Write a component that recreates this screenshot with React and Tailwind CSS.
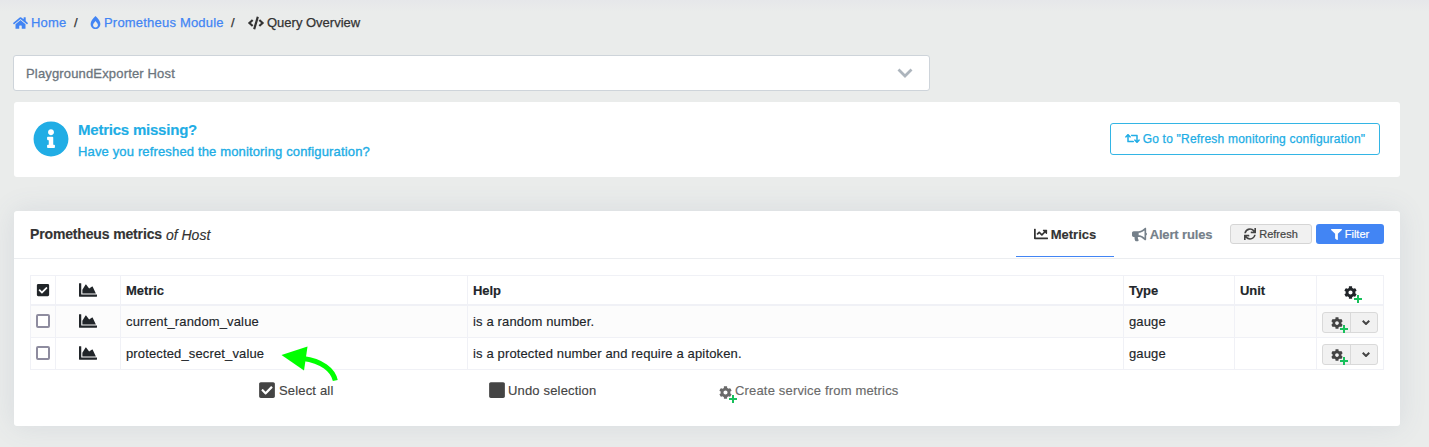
import React from "react";
import {
  FaHome, FaBurn, FaCode, FaInfoCircle, FaRetweet, FaChartLine, FaBullhorn,
  FaSync, FaFilter, FaChartArea, FaCheckSquare, FaSquare, FaCog,
} from "react-icons/fa";

const metrics = [
  { name: "current_random_value", help: "is a random number.", type: "gauge", unit: "" },
  { name: "protected_secret_value", help: "is a protected number and require a apitoken.", type: "gauge", unit: "" },
];

function Chevron({ className, strokeWidth }) {
  return (
    <svg viewBox="0 0 16 10" fill="none" stroke="currentColor" strokeWidth={strokeWidth} className={className}>
      <path d="M1.5 1.5 8 8l6.5-6.5" />
    </svg>
  );
}

function CogPlus({ className }) {
  return (
    <span className="relative block shrink-0">
      <FaCog className={className} />
      <svg viewBox="0 0 8 8" className="absolute -right-[5px] -bottom-[4px] h-2 w-2">
        <path d="M4 0v8M0 4h8" stroke="#18c05b" strokeWidth="2" />
      </svg>
    </span>
  );
}

function Breadcrumb() {
  return (
    <nav className="flex h-[45px] items-center pl-[13px] text-[13px] whitespace-nowrap text-[#333] [-webkit-text-stroke:0.25px_currentColor]">
      <a className="flex items-center text-[#4285f4]">
        <FaHome className="mr-[3px] h-[14px] w-[15px]" />
        <span className="w-9 tracking-[0.2px]">Home</span>
      </a>
      <span className="ml-[7px] w-4">/</span>
      <a className="flex items-center text-[#4285f4]">
        <FaBurn className="mr-[3px] h-[13px] w-[11px]" />
        <span className="w-[119px] tracking-[0.2px]">Prometheus Module</span>
      </a>
      <span className="ml-[8px] w-[17px]">/</span>
      <FaCode className="mr-[3px] h-[14px] w-4" />
      <span>Query Overview</span>
    </nav>
  );
}

const cell = "flex items-center border-r border-[#f0f1f6] pl-[5px]";
const columns = "grid grid-cols-[25px_65px_347px_656px_111px_82px_67px] border-l border-[#f0f1f6]";

function AreaIcon({ className }) {
  return <FaChartArea className={"mr-[6px] h-[18px] w-[18px] " + className} />;
}

function MetricsTable() {
  return (
    <div className="mt-4 ml-4 w-[1354px] border-t border-[#f0f1f6] text-[13px] tracking-[0.14px] text-[#212529]">
      <div className={columns + " h-[30px] border-b-2 font-bold tracking-[-0.05px]"}>
        <div className={cell}><FaCheckSquare className="h-[14px] w-[14px]" /></div>
        <div className={cell + " justify-center"}><AreaIcon className="" /></div>
        <div className={cell + " pt-px"}>Metric</div>
        <div className={cell + " pt-px"}>Help</div>
        <div className={cell + " pt-px"}>Type</div>
        <div className={cell + " pt-px"}>Unit</div>
        <div className={cell + " justify-center"}><span className="mt-[5px] mr-[5px]"><CogPlus className="h-[13px] w-[13px]" /></span></div>
      </div>
      {metrics.map((m, i) => (
        <div key={m.name} className={columns + " h-8 border-b " + (i % 2 ? "bg-white" : "bg-[#fcfcfc]")}>
          <div className={cell}><span className="mb-px h-[14px] w-[14px] rounded-[2px] border-2 border-[#8e8c9f] bg-white" /></div>
          <div className={cell + " justify-center"}><AreaIcon className="mb-[2px]" /></div>
          <div className={cell}>{m.name}</div>
          <div className={cell}>{m.help}</div>
          <div className={cell}>{m.type}</div>
          <div className={cell}>{m.unit}</div>
          <div className={cell}>
            <div className="mt-[2px] flex h-[21px] w-14 rounded-[3px] border border-[#d9d9d9] bg-[#f1f1f1] text-[#444]">
              <button className="flex w-7 items-center border-r border-[#d9d9d9] pt-px pl-[8px]"><CogPlus className="h-[12px] w-[12px]" /></button>
              <button className="flex flex-1 items-center justify-center pb-px pl-[3px]"><Chevron className="h-[5px] w-2" strokeWidth="4" /></button>
            </div>
          </div>
        </div>
      ))}
    </div>
  );
}

function MetricsPanel() {
  return (
    <section className="relative mt-[34px] ml-[14px] h-[215px] w-[1386px] rounded-[3px] bg-white shadow-[0_0_28px_rgba(86,96,140,0.12)]">
      <header className="flex h-12 items-center border-b border-[#ebedf0] pr-4 pl-4">
        <h2 className="text-[14px] font-bold tracking-[-0.15px] text-[#333]">Prometheus metrics</h2>
        <i className="mt-[2px] ml-1 text-[14px] text-[#333]">of Host</i>
        <div className="ml-auto flex h-full items-center pb-px">
          <a className="flex h-[46px] w-[98px] items-center justify-center self-start border-b border-[#4285f4] pt-[3px] text-[13px] font-bold text-[#333]">
            <FaChartLine className="mr-[3px] mb-[2px] h-[14px] w-[14px]" />Metrics
          </a>
          <a className="flex w-[116px] items-center justify-center pt-px text-[13px] font-bold tracking-[-0.15px] text-[#75808a]">
            <FaBullhorn className="mr-[3px] h-[15px] w-[15px]" />Alert rules
          </a>
          <button className="flex h-5 w-[82px] items-center justify-center rounded-[3px] border border-[#d5d5d5] bg-[#f1f1f1] text-[11px] text-[#444] [-webkit-text-stroke:0.2px_currentColor]">
            <FaSync className="mr-[3px] h-[12px] w-[12px]" />Refresh
          </button>
          <button className="ml-1 flex h-5 w-17 items-center justify-center rounded-[3px] bg-[#4285f4] text-[11px] text-white [-webkit-text-stroke:0.2px_currentColor]">
            <FaFilter className="mr-[3px] h-[11px] w-[11px]" />Filter
          </button>
        </div>
      </header>
      <MetricsTable />
      <div className="flex h-[41px] items-center pl-[244px] text-[13px] tracking-[0.17px] text-[#444]">
        <div className="flex w-[230px] items-center"><FaCheckSquare className="mr-[3px] mb-px h-[18px] w-[18px]" />Select all</div>
        <div className="flex w-[231px] items-center"><FaSquare className="mr-[2px] mb-px h-[18px] w-[18px]" />Undo selection</div>
        <div className="flex items-center text-[#6a6a6a]"><span className="mt-[3px] mr-[3px]"><CogPlus className="h-[13px] w-[13px]" /></span>Create service from metrics</div>
      </div>
      <svg viewBox="0 0 60 38" className="absolute top-[133px] left-[265px] h-[38px] w-[60px]">
        <path d="M24 14.5C43 17 54 26 56.3 36.5" fill="none" stroke="#00ff00" strokeWidth="5" />
        <path d="M2.5 11 28.5 2.5 25 26.5Z" fill="#00ff00" />
      </svg>
    </section>
  );
}

export default function App() {
  return (
    <main className="h-[447px] w-[1429px] overflow-hidden bg-[linear-gradient(#e6e7ea,#eaeceb_12px)] [font-family:'Liberation_Sans',Arial,sans-serif] [-webkit-text-stroke:0.15px_currentColor]">
      <Breadcrumb />
      <div className="mt-[10px] ml-[13px] flex h-9 w-[917px] items-center justify-between rounded-[3px] border border-[#ced4da] bg-white pr-4 pl-3 text-[13px] tracking-[0.16px] text-[#6c757d] [-webkit-text-stroke:0.3px_currentColor]">
        <span className="pt-px">PlaygroundExporter Host</span>
        <Chevron className="h-[10px] w-4 text-[#adb5bd]" strokeWidth="2.8" />
      </div>
      <section className="mt-[11px] ml-[14px] flex h-[75px] w-[1386px] items-center rounded-[3px] bg-white pr-5 pl-[19px] text-[#21ade5]">
        <FaInfoCircle className="mb-[2px] h-[36px] w-[36px]" />
        <div className="ml-[9px] pt-[2px]">
          <div className="text-[15px] leading-[22px] font-bold tracking-[-0.22px]">Metrics missing?</div>
          <div className="text-[13px] leading-[22px] tracking-[0.15px] [-webkit-text-stroke:0.35px_currentColor]">Have you refreshed the monitoring configuration?</div>
        </div>
        <button className="mb-[2px] ml-auto flex h-8 w-[270px] items-center justify-center rounded-[3px] border border-[#33b5e5] text-[12px] tracking-[0.2px] whitespace-nowrap [-webkit-text-stroke:0.25px_currentColor]">
          <FaRetweet className="mr-[3px] h-[15px] w-[15px]" />Go to "Refresh monitoring configuration"
        </button>
      </section>
      <MetricsPanel />
    </main>
  );
}
